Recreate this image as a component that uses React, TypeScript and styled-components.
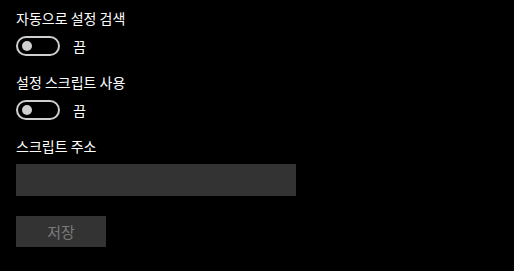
import React from 'react'
import styled, { createGlobalStyle } from 'styled-components'

const Global = createGlobalStyle`
  html, body {
    margin: 0;
    padding: 0;
    background: #000;
  }
  body {
    font-family: 'Noto Sans CJK KR', 'Noto Sans', sans-serif;
    color: #fff;
  }
`;

const Page = styled.div`
  width: 514px;
  height: 271px;
  box-sizing: border-box;
  padding: 8px 16px 0;
  background: #000;
  display: flex;
  flex-direction: column;
`;

const Section = styled.div<{ $last?: boolean }>`
  display: flex;
  flex-direction: column;
  gap: 8px;
  margin-bottom: ${p => (p.$last ? '0' : '16px')};
`;

const Label = styled.div`
  font-size: 14px;
  line-height: 20px;
  height: 20px;
  color: #fff;
`;

const Row = styled.div`
  display: flex;
  align-items: center;
  gap: 13px;
`;

const Switch = styled.div`
  width: 44px;
  height: 20px;
  box-sizing: border-box;
  border: 2px solid #cfcfcf;
  border-radius: 10px;
  display: flex;
  align-items: center;
  padding-left: 4px;

  &::before {
    content: '';
    width: 10px;
    height: 10px;
    border-radius: 50%;
    background: #cfcfcf;
  }
`;

const State = styled.span`
  font-size: 14px;
  line-height: 20px;
  color: #fff;
`;

const Input = styled.div`
  width: 280px;
  height: 32px;
  background: #333;
`;

const Button = styled.button`
  margin-top: 20px;
  width: 90px;
  height: 31px;
  border: 0;
  padding: 0;
  background: #333;
  color: #7a7a7a;
  font-family: inherit;
  font-size: 15px;
`;

function Toggle({ label }: { label: string }) {
  return (
    <Section>
      <Label>{label}</Label>
      <Row>
        <Switch />
        <State>끔</State>
      </Row>
    </Section>
  )
}

export default function App() {
  return (
    <Page>
      <Global />
      <Toggle label="자동으로 설정 검색" />
      <Toggle label="설정 스크립트 사용" />
      <Section $last>
        <Label>스크립트 주소</Label>
        <Input />
      </Section>
      <Button disabled>저장</Button>
    </Page>
  )
}
